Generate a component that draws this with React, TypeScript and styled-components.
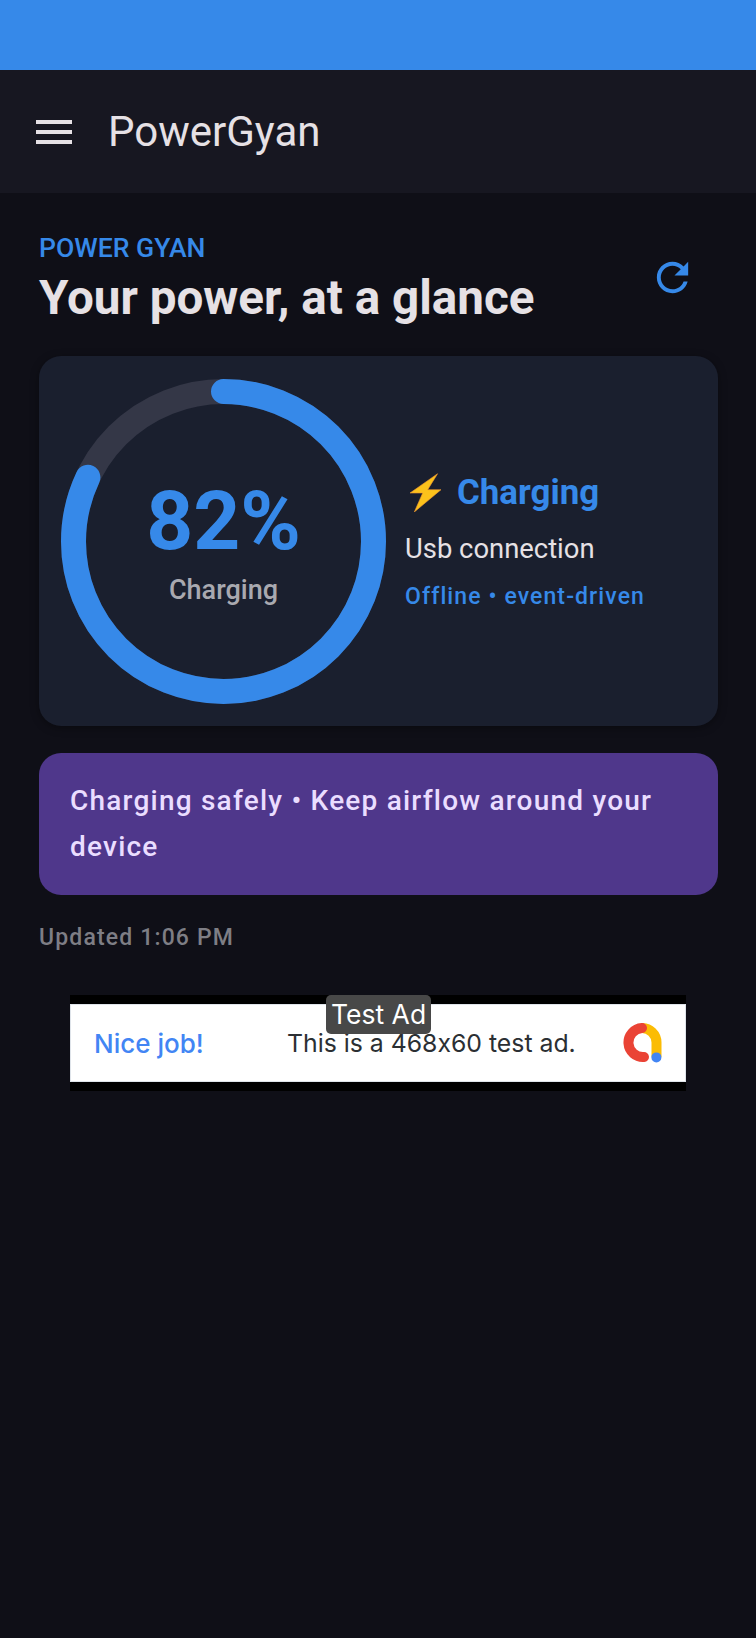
import React from "react";
import styled, { createGlobalStyle } from "styled-components";

const Global = createGlobalStyle`
  html, body { margin: 0; padding: 0; background: #0f0f17; }
  body { font-family: Roboto, "Liberation Sans", sans-serif; }
  * { box-sizing: border-box; }
`;

const Page = styled.div`
  width: 756px;
  height: 1638px;
  overflow: hidden;
  background: #0f0f17;
  display: flex;
  flex-direction: column;
`;
const StatusBar = styled.div`
  height: 70px;
  background: #3689e9;
`;
const AppBar = styled.header`
  height: 123px;
  background: #171721;
  display: flex;
  align-items: center;
  padding-left: 30px;
  gap: 30px;
`;
const MenuIcon = styled.svg`
  width: 48px;
  height: 48px;
  fill: #e6e1e5;
  display: block;
`;
const AppTitle = styled.h1`
  margin: 0;
  font-size: 42px;
  font-weight: 400;
  color: #e6e1e5;
  line-height: 50px;
`;
const Content = styled.main`
  padding: 36px 38px 0 39px;
  display: flex;
  flex-direction: column;
`;
const HeadRow = styled.div`
  display: flex;
  justify-content: space-between;
  align-items: flex-start;
  height: 91px;
`;
const Eyebrow = styled.div`
  font-size: 26.6px;
  line-height: 30px;
  font-weight: 500;
  color: #3689e9;
  margin-top: 4px;
`;
const Title = styled.h2`
  margin: 3px 0 0;
  font-size: 47.6px;
  line-height: 65px;
  font-weight: 700;
  color: #e6e1e5;
`;
const RefreshIcon = styled.svg`
  width: 47px;
  height: 47px;
  fill: #3689e9;
  margin: 25px 22px 0 0;
  display: block;
`;
const Card = styled.section`
  margin-top: 36px;
  height: 370px;
  background: #1a1f2e;
  border-radius: 22px;
  box-shadow: 0 2px 8px rgba(0, 0, 0, 0.35);
  display: flex;
  align-items: center;
  padding-left: 22px;
  gap: 19px;
`;
const RingBox = styled.div`
  position: relative;
  width: 325px;
  height: 325px;
  flex: none;
`;
const RingSvg = styled.svg`
  display: block;
  width: 325px;
  height: 325px;
`;
const RingCenter = styled.div`
  position: absolute;
  inset: 0;
  display: flex;
  flex-direction: column;
  align-items: center;
  justify-content: center;
  padding-bottom: 4px;
`;
const Percent = styled.div`
  font-size: 82px;
  line-height: 98px;
  font-weight: 700;
  color: #3689e9;
`;
const RingLabel = styled.div`
  margin-top: 3px;
  font-size: 27px;
  line-height: 34px;
  font-weight: 500;
  color: #a9a9b0;
`;
const Info = styled.div`
  display: flex;
  flex-direction: column;
`;
const StateRow = styled.div`
  display: flex;
  align-items: center;
  gap: 16px;
  padding-left: 5px;
  font-size: 34.9px;
  line-height: 46px;
  font-weight: 700;
  color: #3689e9;
`;
const Bolt = styled.svg`
  width: 31px;
  height: 39px;
  display: block;
`;
const Connection = styled.div`
  margin-top: 15px;
  font-size: 27.4px;
  line-height: 36px;
  color: #e6e1e5;
`;
const Mode = styled.div`
  margin-top: 14px;
  font-size: 23px;
  line-height: 32px;
  font-weight: 500;
  letter-spacing: 1.1px;
  color: #3689e9;
`;
const Tip = styled.section`
  margin-top: 27px;
  background: #4f378b;
  border-radius: 22px;
  padding: 25px 32px 25px 31px;
  font-size: 28px;
  line-height: 46px;
  font-weight: 500;
  letter-spacing: 1.22px;
  color: #eaddff;
`;
const Updated = styled.div`
  margin-top: 28px;
  font-size: 23px;
  line-height: 30px;
  font-weight: 500;
  letter-spacing: 1.15px;
  color: #7e7e85;
`;
const AdSlot = styled.div`
  position: relative;
  margin: 42px 0 0 31px;
  width: 616px;
  height: 96px;
  background: #000;
  padding: 9px 0 9px;
`;
const AdBanner = styled.div`
  height: 78px;
  background: #fff;
  border: 1px solid #dfe4ea;
  display: flex;
  align-items: center;
  font-family: Inter, Roboto, sans-serif;
  font-feature-settings: "calt" 0;
  padding: 0 23px 0 23px;
`;
const AdHead = styled.div`
  width: 193px;
  font-size: 26px;
  color: #4285f4;
  font-weight: 500;
`;
const AdText = styled.div`
  flex: 1;
  font-size: 24.8px;
  color: #2b2f33;
`;
const AdLogo = styled.svg`
  width: 40px;
  height: 40px;
  display: block;
`;
const AdBadge = styled.div`
  position: absolute;
  top: 0;
  left: 256px;
  height: 39px;
  padding: 0 5px;
  border-radius: 5px;
  background: #484848;
  color: #fff;
  font-family: Inter, Roboto, sans-serif;
  font-size: 26.5px;
  line-height: 39px;
`;

const R = 150;
const C = 2 * Math.PI * R;

export default function App() {
  return (
    <Page>
      <Global />
      <StatusBar />
      <AppBar>
        <MenuIcon viewBox="0 0 24 24">
          <path d="M3 18h18v-2H3v2zm0-5h18v-2H3v2zm0-7v2h18V6H3z" />
        </MenuIcon>
        <AppTitle>PowerGyan</AppTitle>
      </AppBar>
      <Content>
        <HeadRow>
          <div>
            <Eyebrow>POWER GYAN</Eyebrow>
            <Title>Your power, at a glance</Title>
          </div>
          <RefreshIcon viewBox="0 0 24 24">
            <path d="M17.65 6.35C16.2 4.9 14.21 4 12 4c-4.42 0-7.99 3.58-7.99 8s3.57 8 7.99 8c3.73 0 6.84-2.55 7.73-6h-2.08c-.82 2.33-3.04 4-5.65 4-3.31 0-6-2.69-6-6s2.69-6 6-6c1.66 0 3.14.69 4.22 1.78L13 11h7V4l-2.35 2.35z" />
          </RefreshIcon>
        </HeadRow>
        <Card>
          <RingBox>
            <RingSvg viewBox="0 0 325 325">
              <circle cx="162.5" cy="162.5" r={R} fill="none" stroke="#343747" strokeWidth="25" />
              <circle
                cx="162.5"
                cy="162.5"
                r={R}
                fill="none"
                stroke="#3689e9"
                strokeWidth="25"
                strokeLinecap="round"
                strokeDasharray={`${C * 0.82} ${C}`}
                transform="rotate(-90 162.5 162.5)"
              />
            </RingSvg>
            <RingCenter>
              <Percent>82%</Percent>
              <RingLabel>Charging</RingLabel>
            </RingCenter>
          </RingBox>
          <Info>
            <StateRow>
              <Bolt viewBox="0 0 31 39">
                <path d="M27.6 .7 L0 20 L12.7 20 L4.3 39 L31 16.7 L17.7 16.7 Z" fill="#fcc21b" stroke="#f19534" strokeWidth="0.6" />
              </Bolt>
              Charging
            </StateRow>
            <Connection>Usb connection</Connection>
            <Mode>Offline • event-driven</Mode>
          </Info>
        </Card>
        <Tip>Charging safely • Keep airflow around your device</Tip>
        <Updated>Updated 1:06 PM</Updated>
        <AdSlot>
          <AdBanner>
            <AdHead>Nice job!</AdHead>
            <AdText>This is a 468x60 test ad.</AdText>
            <AdLogo viewBox="0 0 40 40">
              <path d="M19.5 5 A14.5 14.5 0 0 1 34.5 19.5 L34.5 34" fill="none" stroke="#fbbc04" strokeWidth="10" />
              <path d="M20 5 A14.5 14.5 0 1 0 22 34" fill="none" stroke="#ea4335" strokeWidth="10" strokeLinecap="round" />
              <circle cx="34.4" cy="34.4" r="5" fill="#4285f4" />
            </AdLogo>
          </AdBanner>
          <AdBadge>Test Ad</AdBadge>
        </AdSlot>
      </Content>
    </Page>
  );
}
